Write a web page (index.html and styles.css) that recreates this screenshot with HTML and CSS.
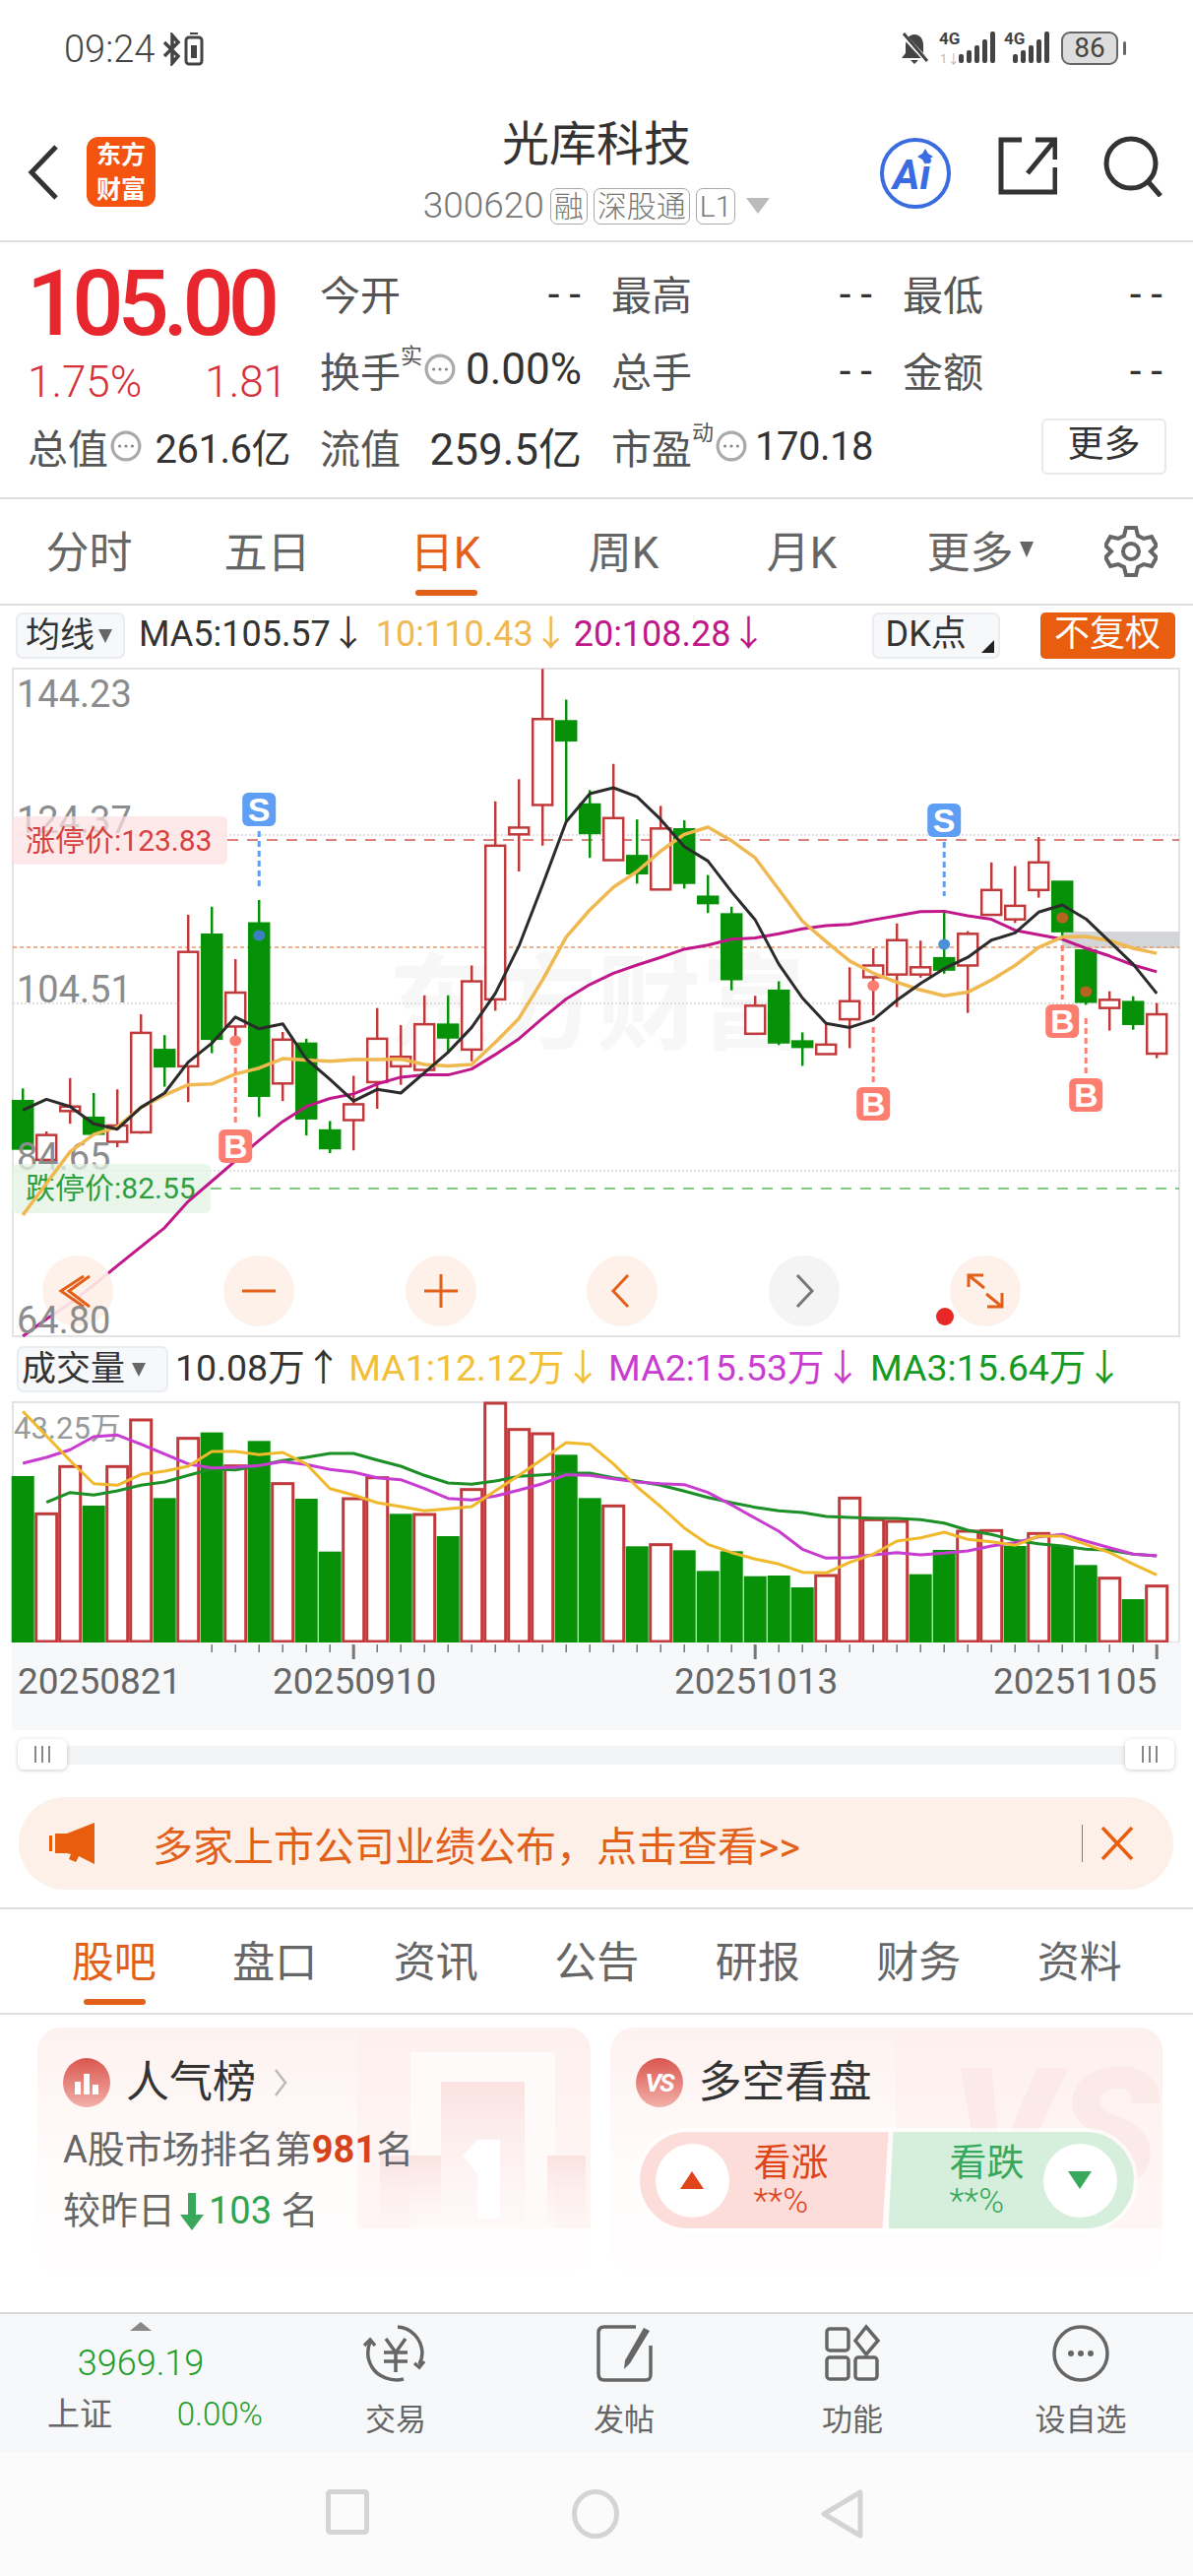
FILE: index.html
```html
<!DOCTYPE html>
<html>
<head>
    <title>光库科技</title>
    <link rel="stylesheet" href="styles.css">
</head>
<body>
    <div class="status-bar">
        <div class="status-left">
            <span class="status-time">09:24</span>
            <svg width="44" height="34" viewBox="0 0 44 34" fill="none" stroke="#444" stroke-width="3.5">
                <path d="M2 10l14 14-6 7V3l6 7L2 24"/>
                <rect x="24" y="5" width="16" height="27" rx="3" stroke-width="3"/>
                <rect x="29" y="13" width="6" height="13" fill="#444" stroke="none"/>
                <rect x="28" y="0" width="8" height="2" fill="#444" stroke="none"/>
            </svg>
        </div>
        <div class="status-right">
            <svg class="bell" width="30" height="34" viewBox="0 0 30 34">
                <path d="M15 3c6 0 9 5 9 11v8l4 5H2l4-5v-8c0-6 3-11 9-11z" fill="#444"/>
                <path d="M11 29h8l-4 4z" fill="#444"/>
                <path d="M2 2l26 28" stroke="#fff" stroke-width="5"/>
                <path d="M4 2l24 28" stroke="#444" stroke-width="3"/>
            </svg>
            <div class="signal signal-first">
                <span class="signal-label">4G</span>
                <span class="signal-data">1↓</span>
                <i class="b1"></i><i class="b2"></i><i class="b3"></i><i class="b4"></i><i class="b5"></i>
            </div>
            <div class="signal">
                <span class="signal-label">4G</span>
                <i class="b1"></i><i class="b2"></i><i class="b3"></i><i class="b4"></i><i class="b5"></i>
            </div>
            <div class="battery"><span>86</span></div>
            <div class="battery-tip"></div>
        </div>
    </div>

    <div class="header">
        <div class="header-left">
            <svg width="34" height="58" viewBox="0 0 34 58" fill="none" stroke="#333" stroke-width="5">
                <path d="M30 3L5 29l25 26"/>
            </svg>
            <div class="logo"><span>东方</span><span>财富</span></div>
        </div>
        <div class="header-center">
            <div class="stock-name">光库科技</div>
            <div class="stock-sub">
                <span class="stock-code">300620</span>
                <span class="tag">融</span>
                <span class="tag">深股通</span>
                <span class="tag">L1</span>
                <span class="tag-arrow"></span>
            </div>
        </div>
        <div class="header-right">
            <svg width="76" height="76" viewBox="0 0 76 76">
                <circle cx="38" cy="38" r="34" fill="#fff" stroke="#3a6be0" stroke-width="4"/>
                <text x="15" y="54" class="ai-text">Ai</text>
                <path d="M48 13l3 5 5 3-5 3-3 5-3-5-5-3 5-3z" fill="#3a6be0"/>
            </svg>
            <svg width="60" height="60" viewBox="0 0 60 60" fill="none" stroke="#333" stroke-width="5">
                <path d="M24 4H3v53h55V32M58 24V4H38M58 4L30 38"/>
            </svg>
            <svg width="62" height="62" viewBox="0 0 62 62" fill="none" stroke="#333" stroke-width="5">
                <circle cx="29" cy="28" r="25"/>
                <path d="M46 46l13 15"/>
            </svg>
        </div>
    </div>

    <div class="quote">
        <div class="price-box">
            <div class="price">105.00</div>
            <div class="price-change"><span>1.75%</span><span>1.81</span></div>
        </div>
        <div class="cell"><span>今开</span><span class="dash">--</span></div>
        <div class="cell"><span>最高</span><span class="dash">--</span></div>
        <div class="cell"><span>最低</span><span class="dash">--</span></div>
        <div class="cell">
            <span>换手<sup>实</sup><svg class="info" viewBox="0 0 30 30"><use href="#dots"/></svg></span>
            <span class="value">0.00%</span>
        </div>
        <div class="cell"><span>总手</span><span class="dash">--</span></div>
        <div class="cell"><span>金额</span><span class="dash">--</span></div>
        <div class="cell cell-first">
            <span>总值<svg class="info" viewBox="0 0 30 30"><use href="#dots"/></svg></span>
            <span class="value value-small">261.6亿</span>
        </div>
        <div class="cell"><span>流值</span><span class="value">259.5亿</span></div>
        <div class="cell">
            <span>市盈<sup>动</sup><svg class="info" viewBox="0 0 30 30"><use href="#dots"/></svg></span>
            <span class="value value-small">170.18</span>
        </div>
        <div class="more-cell"><div class="more-btn">更多</div></div>
    </div>

    <div class="tabs">
        <div class="tab">分时</div>
        <div class="tab">五日</div>
        <div class="tab active">日K</div>
        <div class="tab">周K</div>
        <div class="tab">月K</div>
        <div class="tab">更多<span class="tab-arrow"></span></div>
        <div class="tab-gear">
            <svg width="54" height="54" viewBox="0 0 54 54" fill="none" stroke="#666" stroke-width="4">
                <path d="M22 3h10l2 8 6 3 8-2 5 9-6 6 0 0 6 6-5 9-8-2-6 3-2 8H22l-2-8-6-3-8 2-5-9 6-6-6-6 5-9 8 2 6-3z"/>
                <circle cx="27" cy="27" r="8"/>
            </svg>
        </div>
    </div>

    <div class="legend">
        <div class="pick">均线<span class="pick-arrow"></span></div>
        <span class="ma-black">MA5:105.57↓</span>
        <span class="ma-orange">10:110.43↓</span>
        <span class="ma-pink">20:108.28↓</span>
        <div class="dk-btn">DK点<span class="dk-corner"></span></div>
        <div class="fq-btn">不复权</div>
    </div>

    <svg id="price-chart" class="chart" width="1212" height="682" viewBox="0 678 1212 682"></svg>

    <div class="legend vol-legend">
        <div class="pick pick-wide">成交量<span class="pick-arrow"></span></div>
        <span class="ma-black">10.08万↑</span>
        <span class="vol-ma1">MA1:12.12万↓</span>
        <span class="vol-ma2">MA2:15.53万↓</span>
        <span class="vol-ma3">MA3:15.64万↓</span>
    </div>

    <svg id="vol-chart" class="chart" width="1212" height="335" viewBox="0 1423 1212 335"></svg>

    <div class="slider">
        <div class="slider-track"></div>
        <div class="slider-handle"><i></i><i></i><i></i></div>
        <div class="slider-handle"><i></i><i></i><i></i></div>
    </div>

    <div class="notice">
        <svg width="48" height="42" viewBox="0 0 48 42" fill="#e85d0e">
            <path d="M0 13h3v16H0zM6 11h12L46 0v42L30 34l-3 6-7-3 2-5-4-1H6z"/>
        </svg>
        <span class="notice-text">多家上市公司业绩公布，点击查看&gt;&gt;</span>
        <span class="notice-line"></span>
        <svg width="34" height="34" viewBox="0 0 34 34" stroke="#e85d0e" stroke-width="3.5">
            <path d="M2 1l30 32M32 1L2 33"/>
        </svg>
    </div>

    <div class="sub-tabs">
        <div class="tab active">股吧</div>
        <div class="tab">盘口</div>
        <div class="tab">资讯</div>
        <div class="tab">公告</div>
        <div class="tab">研报</div>
        <div class="tab">财务</div>
        <div class="tab">资料</div>
    </div>

    <div class="cards">
        <div class="card">
            <svg class="card-bg" width="562" height="249" viewBox="0 0 562 249">
                <defs>
                    <linearGradient id="fade" x1="0" y1="0" x2="0" y2="1">
                        <stop offset="0" stop-color="#fae3e1"/>
                        <stop offset="1" stop-color="#fdf5f4" stop-opacity="0.3"/>
                    </linearGradient>
                </defs>
                <rect x="325" y="0" width="237" height="204" fill="#fdf0ee" opacity=".6"/>
                <rect x="379" y="25" width="147" height="179" fill="#fffafa"/>
                <rect x="410" y="55" width="85" height="149" fill="url(#fade)"/>
                <rect x="348" y="130" width="62" height="74" fill="url(#fade)"/>
                <rect x="518" y="130" width="39" height="74" fill="url(#fade)"/>
                <path d="M432 130l15-16h23v80h-23v-45z" fill="#fff"/>
            </svg>
            <div class="card-title">
                <span class="card-icon">
                    <svg width="28" height="28" viewBox="0 0 28 28" fill="#fff">
                        <rect x="2" y="13" width="6" height="13"/><rect x="11" y="5" width="6" height="21"/><rect x="20" y="16" width="6" height="10"/>
                    </svg>
                </span>
                人气榜
                <svg class="card-arrow" width="14" height="30" viewBox="0 0 14 30" fill="none" stroke="#bbb" stroke-width="2.5"><path d="M2 2l10 13L2 28"/></svg>
            </div>
            <div class="rank-line">A股市场排名第<b>981</b>名</div>
            <div class="rank-line">较昨日<svg width="24" height="38" viewBox="0 0 24 38" fill="#3aa85c"><path d="M8 0h8v22h8L12 38 0 22h8z"/></svg><em>103</em> 名</div>
        </div>
        <div class="card">
            <svg class="card-bg" width="561" height="249" viewBox="0 0 561 249">
                <rect x="290" y="0" width="271" height="204" fill="#fdf0ee" opacity=".6"/>
                <text x="345" y="162" class="card-vs">VS</text>
            </svg>
            <div class="card-title">
                <span class="card-icon vs-icon">VS</span>
                多空看盘
            </div>
            <div class="vote">
                <div class="vote-up">
                    <span class="vote-circle"><i class="up-tri"></i></span>
                    <div class="vote-text"><div class="vote-name">看涨</div><div class="vote-pct">**%</div></div>
                </div>
                <div class="vote-down">
                    <div class="vote-text"><div class="vote-name">看跌</div><div class="vote-pct">**%</div></div>
                    <span class="vote-circle"><i class="down-tri"></i></span>
                </div>
            </div>
        </div>
    </div>

    <div class="bottom-nav">
        <div class="index-box">
            <span class="index-arrow"></span>
            <div class="index-value">3969.19</div>
            <div class="index-row"><span>上证</span><span class="index-pct">0.00%</span></div>
        </div>
        <div class="nav-item">
            <svg width="70" height="60" viewBox="0 0 70 60" fill="none" stroke="#666" stroke-width="3.5">
                <path d="M9 18C6 26 6 36 11 44c6 10 20 15 32 12M37 3c14 1 24 12 25 26 0 6-2 10-3 12"/>
                <path d="M3 22l6-6 5 6M54 40l5 4 5-6"/>
                <path d="M25 15l10 14 10-14M23 29h24M23 38h24M35 29v20"/>
            </svg>
            <span>交易</span>
        </div>
        <div class="nav-item">
            <svg width="60" height="60" viewBox="0 0 60 60" fill="none" stroke="#666" stroke-width="3.5">
                <path d="M42 3H10C6 3 4 5 4 9v42c0 4 2 6 6 6h42c4 0 5-2 5-6V22"/>
                <path d="M50 4l6 3-20 33-6 6 1-9z" fill="#666" stroke="none"/>
            </svg>
            <span>发帖</span>
        </div>
        <div class="nav-item">
            <svg width="60" height="60" viewBox="0 0 60 60" fill="none" stroke="#666" stroke-width="3.5">
                <rect x="4" y="5" width="22" height="22" rx="3"/>
                <rect x="4" y="34" width="22" height="22" rx="3"/>
                <rect x="33" y="34" width="22" height="22" rx="3"/>
                <path d="M44 3l12 14-12 14-11-14z"/>
            </svg>
            <span>功能</span>
        </div>
        <div class="nav-item">
            <svg width="60" height="60" viewBox="0 0 60 60">
                <circle cx="30" cy="30" r="27" fill="none" stroke="#666" stroke-width="3.5"/>
                <circle cx="20" cy="30" r="3" fill="#666"/><circle cx="30" cy="30" r="3" fill="#666"/><circle cx="40" cy="30" r="3" fill="#666"/>
            </svg>
            <span>设自选</span>
        </div>
    </div>

    <div class="system-nav">
        <svg width="44" height="46" viewBox="0 0 44 46" fill="none" stroke="#d4d4d4" stroke-width="5"><rect x="2.5" y="2.5" width="39" height="41" rx="2"/></svg>
        <svg width="48" height="50" viewBox="0 0 48 50" fill="none" stroke="#d4d4d4" stroke-width="5"><ellipse cx="24" cy="25" rx="21.5" ry="22.5"/></svg>
        <svg width="44" height="50" viewBox="0 0 44 50" fill="none" stroke="#d4d4d4" stroke-width="5" stroke-linejoin="round"><path d="M40 3v44L3 25z"/></svg>
    </div>

    <svg class="defs" width="0" height="0">
        <symbol id="dots" viewBox="0 0 30 30">
            <circle cx="15" cy="15" r="13" fill="none" stroke="#aaa" stroke-width="3"/>
            <circle cx="9" cy="15" r="1.5" fill="#888"/><circle cx="15" cy="15" r="1.5" fill="#888"/><circle cx="21" cy="15" r="1.5" fill="#888"/>
        </symbol>
    </svg>

    <script src="chart.js"></script>
</body>
</html>
```

FILE: styles.css
```css
* {
    box-sizing: border-box;
}

body {
    margin: 0;
    width: 1212px;
    font-family: Roboto, "Noto Sans CJK SC", sans-serif;
    background-color: #fff;
    color: #333;
}

.status-bar {
    height: 100px;
    padding: 32px 68px 0 65px;
    display: flex;
    justify-content: space-between;
    align-items: flex-start;
}

.status-left {
    display: flex;
    align-items: center;
    gap: 8px;
}

.status-time {
    font-size: 38px;
    line-height: 36px;
    font-weight: 300;
    color: #444;
}

.status-right {
    display: flex;
    align-items: flex-start;
}

.bell {
    margin: 0 10px 0 0;
}

.signal {
    position: relative;
    width: 46px;
    height: 32px;
    margin-right: 12px;
    display: flex;
    justify-content: flex-end;
    align-items: flex-end;
    gap: 3px;
}

.signal-first {
    width: 57px;
    margin-right: 9px;
}

.signal-label {
    position: absolute;
    left: 0;
    top: -1px;
    font-size: 17px;
    line-height: 17px;
    font-weight: 700;
    color: #444;
}

.signal-data {
    position: absolute;
    left: 1px;
    bottom: -2px;
    font-size: 13px;
    line-height: 13px;
    color: #bbb;
}

.signal i {
    width: 5px;
    background-color: #444;
    border-radius: 2px;
}

.b1 { height: 9px; }
.b2 { height: 13px; }
.b3 { height: 18px; }
.b4 { height: 24px; }
.b5 { height: 32px; }

.battery {
    width: 58px;
    height: 34px;
    border: 2px solid #666;
    border-radius: 9px;
    background-color: #ddd;
    font-size: 28px;
    line-height: 29px;
    text-align: center;
    color: #444;
}

.battery-tip {
    width: 3px;
    height: 14px;
    margin: 10px 0 0 5px;
    background-color: #666;
    border-radius: 2px;
}

.header {
    height: 146px;
    border-bottom: 2px solid #dfdfdf;
    display: grid;
    grid-template-columns: 1fr auto 1fr;
    position: relative;
}

.header-left {
    display: flex;
    align-items: flex-start;
    gap: 27px;
    padding: 46px 0 0 27px;
}

.logo {
    width: 70px;
    height: 71px;
    margin-top: -7px;
    border-radius: 12px;
    background-color: #f4540f;
    color: #fff;
    font-size: 25px;
    line-height: 35px;
    font-weight: 700;
    display: flex;
    flex-direction: column;
    justify-content: center;
    align-items: center;
}

.header-center {
    display: flex;
    flex-direction: column;
    align-items: center;
}

.stock-name {
    font-size: 48px;
    line-height: 60px;
    margin-top: 17px;
}

.stock-sub {
    display: flex;
    align-items: center;
    gap: 6px;
    margin-top: 13px;
    color: #777;
}

.stock-code {
    font-size: 37px;
    line-height: 38px;
    font-weight: 300;
}

.tag {
    border: 1.5px solid #aaa;
    border-radius: 7px;
    font-size: 30px;
    line-height: 35px;
    padding: 0 3px;
    font-weight: 300;
}

.tag-arrow {
    border-left: 12px solid transparent;
    border-right: 12px solid transparent;
    border-top: 16px solid #bbb;
    margin-left: 5px;
}

.header-right {
    display: flex;
    justify-content: flex-end;
    align-items: flex-start;
    gap: 46px;
    padding: 38px 30px 0 0;
}

.ai-text {
    font: italic 700 42px Roboto, sans-serif;
    fill: #3a6be0;
}

.quote {
    height: 261px;
    padding-top: 12px;
    border-bottom: 2px solid #dfdfdf;
    display: grid;
    grid-template-columns: 325px 296px 296px 295px;
    grid-auto-rows: 78px;
    font-size: 41px;
    color: #555;
}

.price-box {
    grid-row: span 2;
    padding: 9px 33px 0 28px;
    color: #e8262d;
}

.price {
    font-size: 92px;
    line-height: 84px;
    font-weight: 500;
    letter-spacing: -6px;
    margin-left: -1px;
}

.price-change {
    display: flex;
    justify-content: space-between;
    font-size: 44px;
    line-height: 50px;
    font-weight: 300;
    margin-top: 12px;
    color: #d6303a;
}

.cell {
    display: flex;
    justify-content: space-between;
    align-items: center;
    padding-right: 30px;
    white-space: nowrap;
}

.cell span {
    display: flex;
    align-items: center;
}

.cell-first {
    padding: 0 30px 0 28px;
}

.value {
    color: #333;
    font-size: 44px;
}

.value-small {
    font-size: 40px;
    letter-spacing: -0.5px;
}

.dash {
    font-family: "Liberation Sans", sans-serif;
    color: #333;
    letter-spacing: 8px;
    margin-right: -8px;
}

.cell sup {
    font-size: 22px;
    line-height: 22px;
    align-self: flex-start;
    margin-top: 6px;
}

.info {
    width: 32px;
    height: 32px;
    margin-left: 2px;
}

.more-cell {
    display: flex;
    align-items: center;
    justify-content: flex-end;
    padding-right: 27px;
}

.more-btn {
    width: 127px;
    height: 57px;
    border: 2px solid #e9e9e9;
    border-radius: 6px;
    font-size: 37px;
    line-height: 50px;
    text-align: center;
    color: #333;
}

.tabs {
    height: 108px;
    border-bottom: 2px solid #dfdfdf;
    display: grid;
    grid-template-columns: repeat(6, 181px) 126px;
    align-items: center;
    font-size: 44px;
    color: #666;
}

.tab {
    position: relative;
    height: 100%;
    padding-bottom: 5px;
    display: flex;
    align-items: center;
    justify-content: center;
}

.tab.active {
    color: #e2601a;
}

.tab.active::after {
    content: "";
    position: absolute;
    left: 50%;
    bottom: 8px;
    width: 63px;
    height: 6px;
    margin-left: -31px;
    border-radius: 3px;
    background-color: #e2601a;
}

.tab-arrow {
    border-left: 7px solid transparent;
    border-right: 7px solid transparent;
    border-top: 16px solid #666;
    margin-left: 6px;
}

.tab-gear {
    display: flex;
    justify-content: center;
}

.legend {
    height: 63px;
    padding: 7px 0 0 16px;
    display: flex;
    align-items: flex-start;
    font-size: 36px;
    line-height: 44px;
    white-space: nowrap;
}

.legend > span {
    height: 44px;
}

.pick {
    width: 111px;
    height: 47px;
    border: 2px solid #e9ecf0;
    border-radius: 7px;
    background-color: #f7f8fa;
    font-size: 35px;
    line-height: 40px;
    padding-left: 8px;
    display: flex;
    align-items: center;
    margin-right: 14px;
}

.pick-arrow {
    border-left: 7px solid transparent;
    border-right: 7px solid transparent;
    border-top: 14px solid #666;
    margin-left: 4px;
}

.ma-black {
    color: #333;
}

.ma-orange {
    color: #f0b850;
    margin-left: 10px;
}

.ma-pink {
    color: #c0188a;
    margin-left: 5px;
}

.dk-btn {
    position: relative;
    width: 130px;
    height: 47px;
    margin-left: 107px;
    border: 2px solid #e9ecf0;
    border-radius: 7px;
    background-color: #f7f8fa;
    line-height: 41px;
    padding-left: 12px;
}

.dk-corner {
    position: absolute;
    right: 4px;
    bottom: 4px;
    border-left: 13px solid transparent;
    border-bottom: 13px solid #222;
}

.fq-btn {
    width: 137px;
    height: 47px;
    margin-left: 41px;
    border-radius: 5px;
    background-color: #e85d0e;
    color: #fff;
    text-align: center;
    line-height: 44px;
}

.chart {
    display: block;
    overflow: visible;
}

.vol-legend {
    padding-left: 17px;
    font-size: 37.5px;
}

.pick-wide {
    width: 154px;
    margin-right: 7px;
    padding-left: 3px;
}

.pick-wide .pick-arrow {
    margin-left: 7px;
}

.vol-ma1 {
    color: #f2c037;
    margin-left: 7px;
}

.vol-ma2 {
    color: #c83ccf;
    margin-left: 7px;
}

.vol-ma3 {
    color: #149a22;
    margin-left: 9px;
}

.axis-text {
    font-size: 38px;
    fill: #8c8c8c;
}

.limit-up {
    font-size: 30px;
    fill: #d6403e;
}

.limit-down {
    font-size: 30px;
    fill: #2e9e3e;
}

.marker-text {
    font-family: "Liberation Sans", sans-serif;
    font-size: 34px;
    font-weight: 700;
    fill: #fff;
    text-anchor: middle;
}

.watermark {
    font-size: 106px;
    font-weight: 700;
    fill: #f7f7f7;
}

.vol-max {
    font-size: 31px;
    fill: #999;
}

.date-text {
    font-size: 37px;
    fill: #666;
}

.slider {
    height: 67px;
    position: relative;
    padding: 15px 32px 0 20px;
}

.slider-track {
    height: 19px;
    background-color: #f2f3f5;
}

.slider-handle {
    position: absolute;
    left: 18px;
    top: 8px;
    width: 50px;
    height: 31px;
    border-radius: 6px;
    background-color: #fff;
    box-shadow: 0 1px 4px rgba(0, 0, 0, 0.2);
    display: flex;
    justify-content: center;
    align-items: center;
    gap: 5px;
}

.slider-handle:last-child {
    left: auto;
    right: 19px;
}

.slider-handle i {
    width: 2px;
    height: 17px;
    background-color: #888;
}

.notice {
    height: 94px;
    margin: 0 20px 0 19px;
    padding: 0 40px 0 31px;
    border-radius: 47px;
    background-color: #fdf0e8;
    display: flex;
    align-items: center;
    color: #e2601a;
    font-size: 41px;
}

.notice-text {
    margin-left: 57px;
}

.notice-line {
    width: 1px;
    height: 38px;
    background-color: #e2601a;
    margin-left: auto;
    margin-right: 18px;
}

.sub-tabs {
    height: 109px;
    margin-top: 18px;
    padding-left: 34px;
    border-top: 2px solid #dfdfdf;
    border-bottom: 2px solid #dfdfdf;
    display: grid;
    grid-template-columns: repeat(7, 163.5px);
    font-size: 43px;
    color: #666;
}

.cards {
    display: flex;
    gap: 20px;
    padding: 13px 31px 0 38px;
    height: 304px;
}

.card {
    position: relative;
    width: 562px;
    height: 249px;
    padding: 31px 26px 0;
    border-radius: 24px;
    overflow: hidden;
    background: linear-gradient(#fdf2f0, #fffdfc 65%, #fffdfd);
}

.card-bg {
    position: absolute;
    left: 0;
    top: 0;
}

.card-vs {
    font-size: 170px;
    font-style: italic;
    font-weight: 900;
    fill: #fbeae8;
}

.card-title {
    position: relative;
    display: flex;
    align-items: center;
    font-size: 44px;
    line-height: 50px;
    color: #333;
}

.card-icon {
    width: 48px;
    height: 50px;
    margin-right: 16px;
    border-radius: 50%;
    background: linear-gradient(#d9574f, #f2b0a8);
    display: flex;
    align-items: center;
    justify-content: center;
}

.vs-icon {
    color: #fff;
    font-size: 26px;
    font-style: italic;
    font-weight: 700;
    letter-spacing: -2px;
}

.card-arrow {
    margin-left: 18px;
}

.rank-line {
    position: relative;
    display: flex;
    align-items: center;
    font-size: 38px;
    line-height: 59px;
    color: #666;
    white-space: pre;
}

.card-title + .rank-line {
    margin-top: 14px;
}

.rank-line + .rank-line {
    margin-top: 3px;
}

.rank-line b {
    color: #d8431c;
}

.rank-line svg {
    margin: 0 5px;
}

.rank-line em {
    font-style: normal;
    color: #2ea44f;
}

.vote {
    position: relative;
    display: flex;
    margin: 25px -4px 0 4px;
    width: 502px;
    height: 98px;
    border-radius: 49px;
    overflow: hidden;
    box-shadow: 0 0 0 4px rgba(255, 255, 255, 0.7);
}

.vote-up,
.vote-down {
    display: flex;
    align-items: center;
}

.vote-up {
    width: 253px;
    flex: none;
    clip-path: polygon(0 0, 100% 0, 247px 100%, 0 100%);
    background-color: #fdddd9;
    color: #e0441a;
    padding-left: 16px;
    gap: 25px;
}

.vote-down {
    flex: 1;
    clip-path: polygon(5px 0, 100% 0, 100% 100%, 0 100%);
    background-color: #d5efdc;
    color: #3aa85c;
    padding-left: 62px;
    gap: 19px;
}

.vote-circle {
    width: 75px;
    height: 75px;
    border-radius: 50%;
    background-color: #fff;
    display: flex;
    align-items: center;
    justify-content: center;
}

.up-tri {
    border-left: 12px solid transparent;
    border-right: 12px solid transparent;
    border-bottom: 18px solid #e0441a;
}

.down-tri {
    border-left: 12px solid transparent;
    border-right: 12px solid transparent;
    border-top: 18px solid #3aa85c;
}

.vote-name {
    font-size: 38px;
    line-height: 44px;
}

.vote-pct {
    font-size: 35px;
    line-height: 36px;
    font-weight: 300;
}

.bottom-nav {
    height: 142px;
    border-top: 2px solid #d8d8dc;
    background-color: #f6f8fa;
    display: grid;
    grid-template-columns: 286px repeat(4, 232px);
    margin-top: -2px;
}

.index-box {
    display: flex;
    flex-direction: column;
    align-items: center;
    padding-top: 8px;
}

.index-arrow {
    border-left: 11px solid transparent;
    border-right: 11px solid transparent;
    border-bottom: 9px solid #888;
}

.index-value {
    color: #1f9e2a;
    font-size: 36px;
    font-weight: 300;
    line-height: 44px;
    margin-top: 11px;
}

.index-row {
    width: 100%;
    display: flex;
    justify-content: space-between;
    padding: 0 19px 0 48px;
    margin-top: 8px;
    font-size: 33px;
    line-height: 44px;
    color: #666;
}

.index-pct {
    color: #1f9e2a;
    font-weight: 300;
}

.nav-item {
    display: flex;
    flex-direction: column;
    align-items: center;
    padding-top: 10px;
    font-size: 31px;
    line-height: 40px;
    color: #666;
}

.nav-item svg {
    margin-bottom: 18px;
}

.system-nav {
    height: 126px;
    background-color: #fbfbfb;
    padding: 38px 334px 0 331px;
    display: flex;
    justify-content: space-between;
    align-items: flex-start;
}

.defs {
    position: absolute;
}
```

FILE: chart.js
```js
document.addEventListener("DOMContentLoaded", function () {
    const UP = "#c0393b";
    const DOWN = "#069108";
    const SVG_NS = "http://www.w3.org/2000/svg";

    function barX(i) {
        return 23.2 + 24 * i;
    }

    // y values below were read off a chart scaled to 2.178 (price) and 3 (volume)
    function priceY(v) {
        return 660 + v / 2.178;
    }

    function volY(v) {
        return 1370 + v / 3;
    }

    function add(svg, name, attrs, text) {
        const el = document.createElementNS(SVG_NS, name);
        Object.keys(attrs).forEach(function (key) {
            el.setAttribute(key, attrs[key]);
        });
        if (text) {
            el.textContent = text;
        }
        svg.appendChild(el);
        return el;
    }

    function drawLine(svg, values, toY, color, width, start) {
        const points = values.map(function (v, i) {
            return barX(i + start).toFixed(1) + "," + toY(v).toFixed(1);
        });
        add(svg, "polyline", {
            points: points.join(" "),
            fill: "none",
            stroke: color,
            "stroke-width": width,
            "stroke-linejoin": "round"
        });
    }

    // [body top, body bottom, wick top, wick bottom, 1 = red / 0 = green]
    const candles = [
        [998, 1103, 970, 1103, 0], [1073, 1128, 1065, 1130, 1], [1010, 1020, 947, 1048, 1],
        [1035, 1070, 980, 1070, 0], [1052, 1088, 972, 1100, 1], [847, 1067, 806, 1070, 1],
        [885, 921, 852, 966, 0], [668, 921, 586, 1000, 1], [630, 860, 568, 892, 0],
        [758, 833, 684, 870, 1], [605, 986, 553, 1033, 0], [862, 959, 845, 998, 1],
        [871, 1036, 860, 1074, 0], [1063, 1102, 1042, 1113, 0], [1005, 1040, 942, 1107, 1],
        [860, 956, 792, 1015, 1], [900, 921, 830, 962, 1], [828, 929, 764, 930, 1],
        [829, 857, 764, 890, 0], [733, 884, 698, 910, 1], [433, 773, 335, 798, 1],
        [393, 408, 286, 490, 1], [153, 343, 42, 433, 1], [158, 200, 110, 378, 0],
        [342, 405, 310, 460, 0], [372, 465, 252, 465, 1], [456, 494, 375, 517, 0],
        [395, 530, 345, 530, 1], [397, 515, 377, 528, 0], [546, 560, 498, 582, 0],
        [585, 728, 568, 753, 0], [787, 849, 765, 849, 1], [754, 868, 733, 874, 0],
        [866, 878, 846, 920, 0], [873, 894, 826, 894, 1], [777, 817, 702, 881, 1],
        [698, 724, 660, 808, 1], [642, 718, 605, 790, 1], [702, 718, 643, 725, 1],
        [682, 707, 580, 716, 0], [628, 698, 622, 803, 1], [531, 586, 470, 586, 1],
        [566, 596, 478, 604, 1], [470, 531, 414, 548, 1], [513, 622, 513, 640, 0],
        [665, 778, 665, 785, 0], [774, 792, 755, 842, 1], [779, 827, 766, 840, 0],
        [806, 893, 781, 903, 1]
    ];

    const ma5 = [1018, 994, 1010, 1048, 1060, 1012, 980, 912, 870, 812, 838, 827, 905, 950, 998, 972, 980, 935, 890, 835, 760, 655, 520, 380, 318, 305, 325, 375, 435, 467, 535, 597, 695, 770, 826, 835, 818, 775, 738, 705, 680, 642, 626, 580, 564, 595, 645, 695, 760];
    const ma10 = [1250, 1180, 1110, 1072, 1055, 1012, 985, 962, 960, 938, 925, 904, 907, 910, 906, 906, 905, 917, 920, 917, 868, 815, 730, 635, 575, 525, 490, 445, 408, 392, 422, 460, 530, 600, 645, 688, 715, 735, 752, 765, 757, 730, 698, 658, 635, 634, 643, 660, 671];
    const ma20 = [1518, 1480, 1445, 1405, 1362, 1320, 1278, 1220, 1175, 1130, 1085, 1043, 1010, 992, 982, 960, 945, 940, 940, 927, 895, 860, 815, 772, 740, 715, 697, 680, 662, 653, 640, 637, 628, 617, 610, 607, 597, 588, 579, 578, 588, 596, 620, 630, 640, 660, 677, 697, 712];

    // [bar top, 1 = red / 0 = green]
    const bars = [
        [387, 0], [502, 1], [358, 1], [477, 0], [358, 1], [216, 1], [454, 0], [272, 1], [254, 0], [356, 1],
        [280, 0], [410, 1], [456, 0], [617, 0], [456, 1], [392, 1], [502, 0], [504, 1], [570, 0], [428, 1],
        [165, 1], [245, 1], [258, 1], [322, 0], [454, 0], [478, 1], [601, 0], [596, 1], [613, 0], [676, 0],
        [616, 0], [692, 0], [690, 0], [726, 0], [690, 1], [454, 1], [520, 1], [525, 1], [686, 0], [612, 0],
        [555, 1], [553, 1], [600, 0], [562, 1], [600, 0], [658, 0], [698, 1], [762, 0], [722, 1]
    ];

    const volMa1 = [190, 265, 340, 410, 415, 382, 372, 357, 312, 312, 322, 315, 350, 425, 445, 468, 480, 493, 487, 480, 432, 385, 335, 285, 290, 350, 420, 480, 545, 595, 620, 640, 655, 680, 682, 650, 625, 585, 575, 558, 580, 587, 598, 570, 570, 595, 620, 655, 688];
    const volMa2 = [348, 330, 307, 267, 262, 290, 320, 350, 362, 360, 355, 343, 352, 367, 375, 392, 398, 425, 455, 460, 448, 430, 410, 383, 385, 395, 405, 410, 413, 437, 475, 515, 555, 610, 637, 635, 627, 620, 627, 622, 615, 600, 590, 572, 565, 585, 605, 625, 630];
    const volMa3 = [467, 437, 445, 432, 415, 405, 385, 365, 368, 355, 340, 330, 318, 318, 338, 357, 385, 408, 412, 402, 388, 383, 378, 378, 392, 402, 415, 433, 452, 468, 482, 493, 498, 510, 513, 515, 516, 520, 530, 552, 565, 583, 593, 600, 610, 613, 625, 630];

    const price = document.getElementById("price-chart");
    const vol = document.getElementById("vol-chart");

    // price chart
    add(price, "rect", { x: 13, y: 679, width: 1185, height: 678, fill: "#fff", stroke: "#e3e3e3", "stroke-width": 2 });
    add(price, "text", { x: 394, y: 1057, class: "watermark" }, "东方财富");
    [848, 1019, 1189].forEach(function (y) {
        add(price, "line", { x1: 13, x2: 1198, y1: y, y2: y, stroke: "#d8d8d8", "stroke-width": 1.5, "stroke-dasharray": "2 2" });
    });
    add(price, "rect", { x: 1079, y: 946, width: 119, height: 17, fill: "#d3d5d8" });
    add(price, "line", { x1: 231, x2: 1198, y1: 853, y2: 853, stroke: "#d9534f", "stroke-width": 1.5, "stroke-dasharray": "11 9" });
    add(price, "line", { x1: 13, x2: 1198, y1: 962, y2: 962, stroke: "#e89a6a", "stroke-width": 1.5, "stroke-dasharray": "4 3" });
    add(price, "line", { x1: 214, x2: 1198, y1: 1207, y2: 1207, stroke: "#5cb85c", "stroke-width": 1.5, "stroke-dasharray": "11 9" });

    candles.forEach(function (c, i) {
        const x = barX(i);
        const color = c[4] ? UP : DOWN;
        add(price, "line", { x1: x, x2: x, y1: priceY(c[2]), y2: priceY(c[3]), stroke: color, "stroke-width": 2.5 });
        add(price, "rect", {
            x: x - 10,
            y: priceY(c[0]),
            width: 20,
            height: (c[1] - c[0]) / 2.178,
            fill: c[4] ? "#fff" : DOWN,
            stroke: color,
            "stroke-width": 2.5
        });
    });

    [[17, 718, "144.23"], [17, 846, "124.37"], [17, 1018, "104.51"], [17, 1188, "84.65"]].forEach(function (t) {
        add(price, "text", { x: t[0], y: t[1], class: "axis-text" }, t[2]);
    });

    add(price, "rect", { x: 12, y: 829, width: 219, height: 49, rx: 6, fill: "#fce0e0", "fill-opacity": 0.72 });
    add(price, "text", { x: 26, y: 864, class: "limit-up" }, "涨停价:123.83");
    add(price, "rect", { x: 12, y: 1182, width: 202, height: 50, rx: 6, fill: "#e3f3e3", "fill-opacity": 0.75 });
    add(price, "text", { x: 26, y: 1217, class: "limit-down" }, "跌停价:82.55");

    drawLine(price, ma20, priceY, "#c0188a", 3, 0);
    drawLine(price, ma10, priceY, "#f0b850", 3.5, 0);
    drawLine(price, ma5, priceY, "#2b2b2b", 3, 0);

    // [bar index, marker text, box top, line top, line bottom, dot y, dot colour]
    const markers = [
        [10, "S", 805, 844, 901, 950, "#3a7fc0"],
        [39, "S", 816, 855, 910, 959, "#4a90d9"],
        [9, "B", 1147, 1064, 1142, 1057, "#fb7e70"],
        [36, "B", 1104, 1043, 1100, 1001, "#fb7e70"],
        [44, "B", 1020, 960, 1015, 932, "#b5651d"],
        [45, "B", 1095, 1034, 1090, 1007, "#b5651d"]
    ];
    markers.forEach(function (m) {
        const x = barX(m[0]);
        const color = m[1] === "S" ? "#5e9ff5" : "#fb7e70";
        add(price, "line", { x1: x, x2: x, y1: m[3], y2: m[4], stroke: color, "stroke-width": 3, "stroke-dasharray": "6 4" });
        add(price, "ellipse", { cx: x, cy: m[5], rx: 6, ry: 5.5, fill: m[6] });
        add(price, "rect", { x: x - 17, y: m[2], width: 34, height: 34, rx: 6, fill: color });
        add(price, "text", { x: x, y: m[2] + 29, class: "marker-text" }, m[1]);
    });

    // zoom and pan buttons
    const orange = "#e2601a";
    [[79, "#fdf0e8"], [263, "#fdf0e8"], [448, "#fdf0e8"], [632, "#fdf0e8"], [817, "#f3f3f3"], [1001, "#fdf0e8"]].forEach(function (b) {
        add(price, "ellipse", { cx: b[0], cy: 1311, rx: 36, ry: 36, fill: b[1], "fill-opacity": 0.9 });
    });
    function button(d, color) {
        add(price, "path", { d: d, fill: "none", stroke: color || orange, "stroke-width": 3 });
    }
    button("M85 1296l-23 15 23 16M91 1296l-21 15 21 16");
    button("M246 1311h34");
    button("M431 1311h34M448 1294v34");
    button("M638 1295l-15 16 15 16");
    button("M810 1295l15 16-15 16", "#777");
    button("M999 1295h-15v12M984 1295l16 13M1003 1327h15v-14M1018 1327l-16-13");
    add(price, "circle", { cx: 960, cy: 1337, r: 9, fill: "#e82727" });
    add(price, "text", { x: 17, y: 1354, class: "axis-text" }, "64.80");

    // volume chart
    add(vol, "rect", { x: 13, y: 1424, width: 1185, height: 244, fill: "#fff", stroke: "#e3e3e3", "stroke-width": 2 });
    bars.forEach(function (b, i) {
        const x = barX(i);
        const y = volY(b[0]);
        if (b[1]) {
            add(vol, "rect", { x: x - 10.5, y: y, width: 21, height: 1667 - y, fill: "#fff", stroke: UP, "stroke-width": 3 });
        } else {
            add(vol, "rect", { x: x - 11.5, y: y, width: 23, height: 1668 - y, fill: DOWN });
        }
    });
    add(vol, "text", { x: 14, y: 1461, class: "vol-max" }, "43.25万");
    drawLine(vol, volMa3, volY, "#1c8f27", 3, 1);
    drawLine(vol, volMa2, volY, "#c83ccf", 3, 0);
    drawLine(vol, volMa1, volY, "#f0b92c", 3, 0);

    // dates strip
    add(vol, "rect", { x: 12, y: 1668, width: 1188, height: 89, fill: "#f7f8fa" });
    for (let i = 8; i <= 48; i++) {
        const major = i === 14 || i === 31 || i === 48;
        add(vol, "line", {
            x1: barX(i), x2: barX(i), y1: 1670, y2: major ? 1685 : 1678,
            stroke: "#777", "stroke-width": major ? 3 : 1.5
        });
    }
    [[18, "20250821"], [277, "20250910"], [685, "20251013"], [1009, "20251105"]].forEach(function (t) {
        add(vol, "text", { x: t[0], y: 1720, class: "date-text" }, t[1]);
    });
});
```
